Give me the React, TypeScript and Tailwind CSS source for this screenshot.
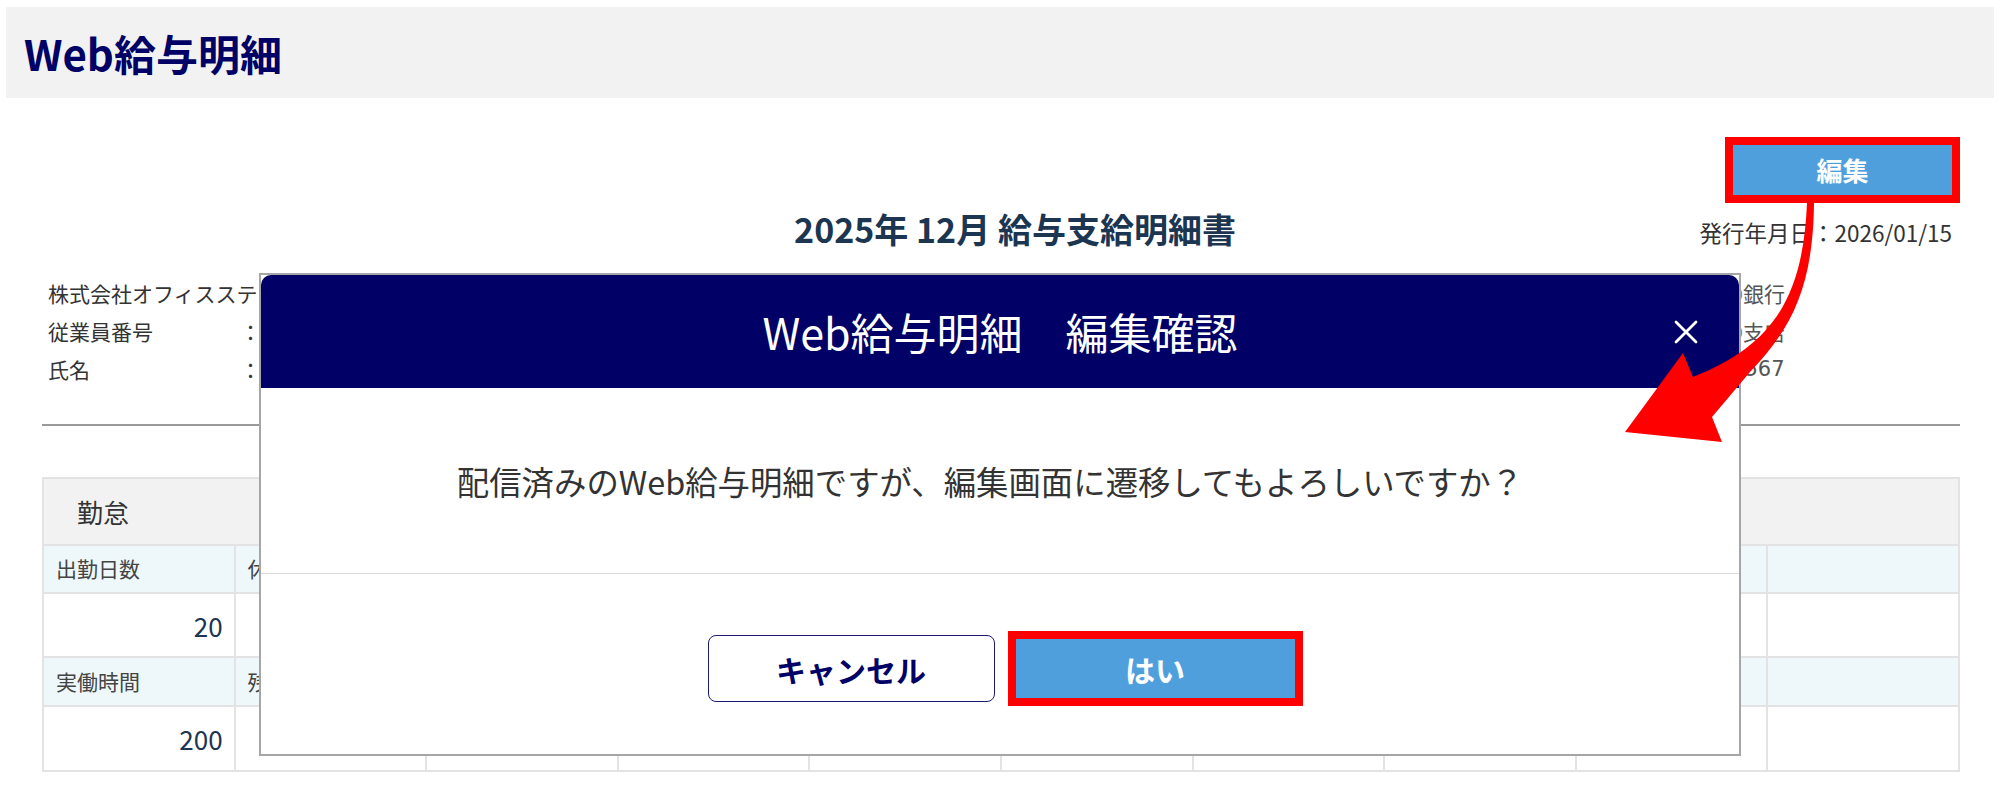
import React from "react";

const row1Labels = ["出勤日数", "休日出勤", "", "", "", "", "", "", "", ""];
const row1Values = ["20", "", "", "", "", "", "", "", "", ""];
const row2Labels = ["実働時間", "残業時間", "", "", "", "", "", "", "", ""];
const row2Values = ["200", "", "", "", "", "", "", "", "", ""];

function LabelRow({ labels, h }: { labels: string[]; h: string }) {
  return (
    <>
      {labels.map((l, i) => (
        <div
          key={i}
          className={`${h} bg-[#eef8fa] border-r-2 border-b-2 border-[#e3e3e3] flex items-center pl-[12px] text-[21px] text-[#444] whitespace-nowrap overflow-hidden`}
        >
          {l}
        </div>
      ))}
    </>
  );
}

function ValueRow({ values, h }: { values: string[]; h: string }) {
  return (
    <>
      {values.map((v, i) => (
        <div
          key={i}
          className={`${h} bg-white border-r-2 border-b-2 border-[#e3e3e3] flex items-center justify-end pr-[11px] text-[26px] text-[#1c3550]`}
        >
          {v}
        </div>
      ))}
    </>
  );
}

export default function App() {
  return (
    <div className="relative w-[2000px] h-[793px] overflow-hidden bg-white font-['Noto_Sans_CJK_JP','Noto_Sans',sans-serif]">
      <header className="mx-[6px] mt-[7px] h-[91px] bg-[#f2f2f2] flex items-center pl-[18px]">
        <h1 className="text-[42px] font-bold text-[#000066] leading-none">Web給与明細</h1>
      </header>

      <main className="pl-[42px] pr-[40px]">
        <div className="flex justify-end mt-[39px]">
          <button className="w-[235px] h-[66px] border-[8px] border-[#ff0000] bg-[#509fdd] text-white text-[26px] font-bold leading-none">
            編集
          </button>
        </div>

        <div className="grid grid-cols-[1fr_auto_1fr] items-center mt-[2px] h-[48px]">
          <div />
          <h2 className="pl-[28px] text-[34px] font-bold text-[#1c3550] leading-none whitespace-nowrap">
            2025年 12月 給与支給明細書
          </h2>
          <div className="justify-self-end pr-[8px] pt-[6px] text-[22.5px] text-[#333] leading-none whitespace-nowrap">
            発行年月日：2026/01/15
          </div>
        </div>

        <div className="flex mt-[21px] text-[21px] text-[#333] leading-[38px]">
          <div className="pl-[6px] grid grid-cols-[192px_auto]">
            <div className="col-span-2 whitespace-nowrap">株式会社オフィスステーション</div>
            <div>従業員番号</div>
            <div>：</div>
            <div>氏名</div>
            <div>：</div>
          </div>
          <div className="ml-auto w-[301px] text-[#555] whitespace-nowrap">
            <div>○○○○銀行</div>
            <div>○○○○支店</div>
            <div className="-ml-[10px] font-['DejaVu_Sans','Noto_Sans_CJK_JP',sans-serif]">普通1234567</div>
          </div>
        </div>

        <div className="mt-[36px] h-[2px] bg-[#999]" />

        <div className="mt-[51px] border-l-2 border-t-2 border-[#e3e3e3]">
          <div className="h-[67px] bg-[#f2f2f2] border-r-2 border-b-2 border-[#e3e3e3] flex items-center pl-[33px] text-[26px] text-[#333]">
            勤怠
          </div>
          <div className="grid grid-cols-10">
            <LabelRow labels={row1Labels} h="h-[48px]" />
            <ValueRow values={row1Values} h="h-[64px]" />
            <LabelRow labels={row2Labels} h="h-[49px]" />
            <ValueRow values={row2Values} h="h-[65px]" />
          </div>
        </div>
      </main>

      {/* Modal */}
      <div className="absolute left-[259px] top-[273px] w-[1482px] h-[483px] border-2 border-[#a6a6a6] bg-white flex flex-col">
        <div className="h-[113px] bg-[#000066] rounded-t-[10px] grid grid-cols-[1fr_auto_1fr] items-center">
          <div />
          <div className="text-[43px] text-white leading-none whitespace-nowrap">Web給与明細　編集確認</div>
          <div className="justify-self-end pr-[41px] flex items-center">
            <svg width="24" height="24" viewBox="0 0 24 24">
              <path d="M2 2 L22 22 M22 2 L2 22" stroke="white" strokeWidth="2.8" strokeLinecap="round" />
            </svg>
          </div>
        </div>
        <div className="h-[185px] flex items-center justify-center pt-[2px] pr-[20px] text-[32.4px] text-[#333] leading-none whitespace-nowrap">
          配信済みのWeb給与明細ですが、編集画面に遷移してもよろしいですか？
        </div>
        <div className="flex-1 border-t border-[#dcdcdc] flex items-center justify-center gap-[13px] pl-[10px] pt-[9px]">
          <button className="w-[287px] h-[67px] rounded-[8px] border-[1.5px] border-[#1a1a70] bg-white text-[30px] font-bold text-[#000066] leading-none">
            キャンセル
          </button>
          <button className="w-[295px] h-[75px] border-[8px] border-[#ff0000] bg-[#509fdd] text-white text-[30px] font-bold leading-none">
            はい
          </button>
        </div>
      </div>

      {/* Red annotation arrow */}
      <svg className="absolute left-0 top-0 pointer-events-none" width="2000" height="793" viewBox="0 0 2000 793">
        <path
          d="M 1807 203 C 1803 295, 1775 345, 1693 377 L 1683 353 L 1625 432 L 1722 442 L 1712 417 L 1750 372 C 1790 330, 1813 290, 1814 203 Z"
          fill="#ff0000"
        />
      </svg>
    </div>
  );
}
